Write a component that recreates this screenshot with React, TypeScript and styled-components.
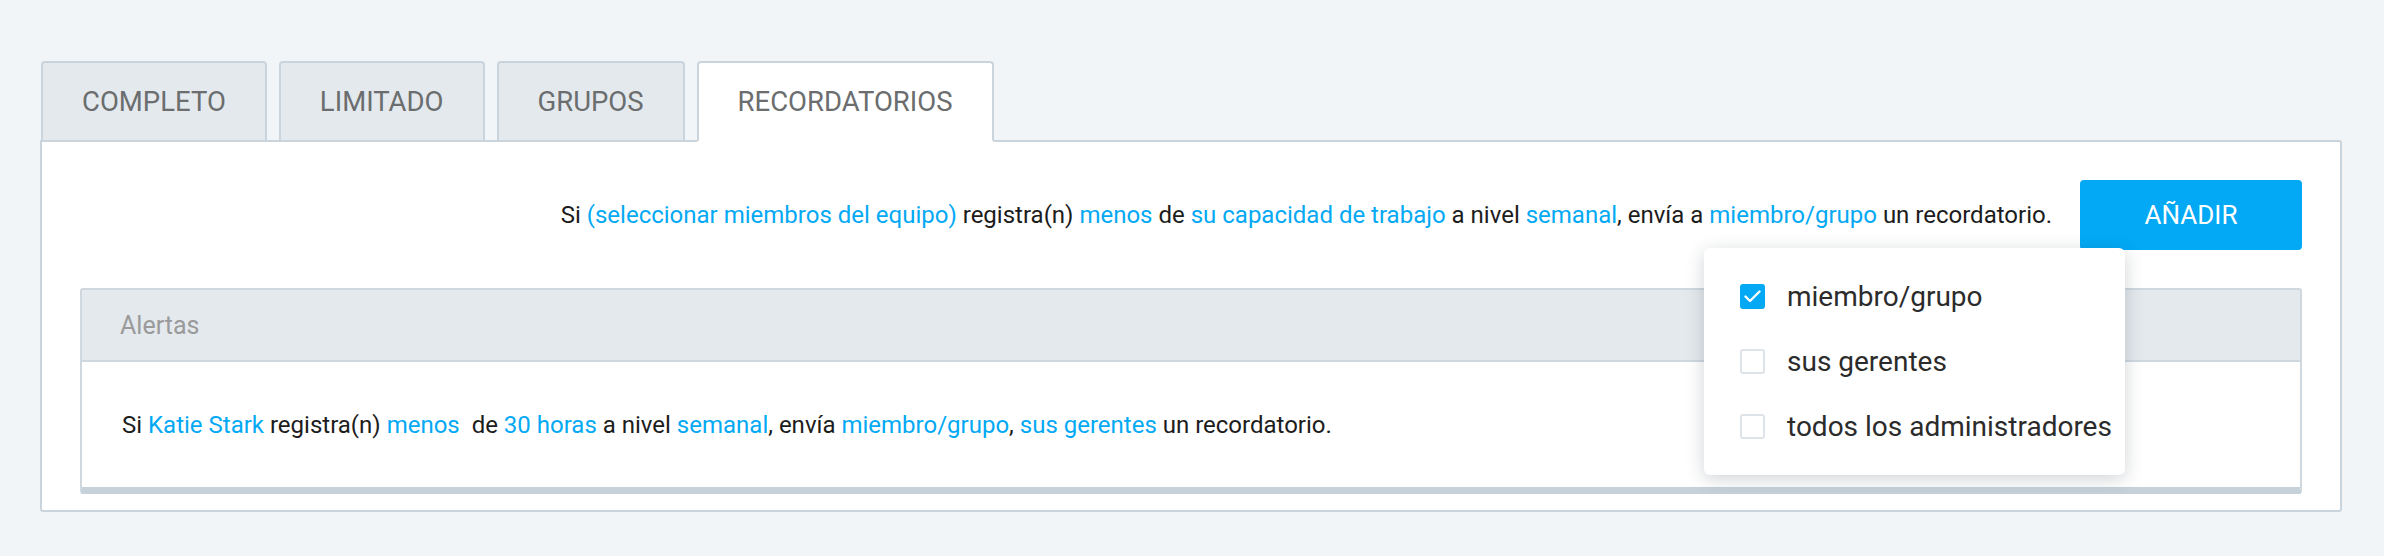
import { FC } from 'react';
import styled, { createGlobalStyle } from 'styled-components';

const GlobalStyle = createGlobalStyle`
  html, body {
    margin: 0;
    padding: 0;
    background: #f1f5f8;
    font-family: Roboto, 'Liberation Sans', Arial, sans-serif;
  }
`;

const BORDER = '#c9d4dc';
const BLUE = '#03a9f4';

const Page = styled.div`
  padding: 61px 42px 0 40px;
`;

const TabBar = styled.div`
  display: flex;
  gap: 12px;
  margin-left: 1px;
  margin-bottom: -2px;
  position: relative;
  z-index: 1;
`;

const Tab = styled.div<{ active?: boolean }>`
  display: flex;
  align-items: center;
  height: 77px;
  padding: 0 39px;
  border: 2px solid ${BORDER};
  border-bottom-color: ${({ active }) => (active ? '#fff' : BORDER)};
  border-radius: 4px 4px 0 0;
  background: ${({ active }) => (active ? '#fff' : '#e4e9ed')};
  color: #6b6d6e;
  font-size: 27.5px;
  text-transform: uppercase;
`;

const Panel = styled.div`
  background: #fff;
  border: 2px solid ${BORDER};
  border-radius: 0 3px 3px 3px;
  padding: 38px 38px 16px 38px;
`;

const RuleRow = styled.div`
  position: relative;
  display: flex;
  justify-content: flex-end;
  align-items: center;
  gap: 28px;
  height: 70px;
`;

const Sentence = styled.div`
  font-size: 24px;
  color: #1c1c1c;
  white-space: nowrap;
`;

const Link = styled.span`
  color: ${BLUE};
`;

const AddButton = styled.button`
  width: 222px;
  height: 70px;
  border: none;
  border-radius: 4px;
  background: ${BLUE};
  color: #fff;
  font-family: inherit;
  font-size: 26px;
  text-transform: uppercase;
`;

const Dropdown = styled.div`
  position: absolute;
  top: 68px;
  right: 177px;
  width: 421px;
  box-sizing: border-box;
  padding: 36px 12px 36px 36px;
  display: flex;
  flex-direction: column;
  gap: 40px;
  background: #fff;
  border-radius: 6px;
  box-shadow: 0 4px 18px rgba(40, 55, 70, 0.22);
  z-index: 2;
`;

const Option = styled.label`
  display: flex;
  align-items: center;
  gap: 22px;
  height: 25px;
  font-size: 28px;
  color: #2b2b2b;
  white-space: nowrap;
`;

const Box = styled.span<{ checked?: boolean }>`
  display: flex;
  align-items: center;
  justify-content: center;
  width: 25px;
  height: 25px;
  box-sizing: border-box;
  flex-shrink: 0;
  border-radius: 3px;
  border: ${({ checked }) => (checked ? 'none' : '2px solid #dde3e8')};
  background: ${({ checked }) => (checked ? BLUE : '#fff')};
`;

const AlertBox = styled.div`
  margin-top: 38px;
  border: 2px solid #cfd8df;
  border-bottom: 7px solid #c6d1d9;
  border-radius: 3px;
`;

const AlertHeader = styled.div`
  display: flex;
  align-items: center;
  height: 70px;
  padding: 0 38px;
  background: #e4e9ed;
  border-bottom: 2px solid #cfd8df;
  color: #9a9a9a;
  font-size: 25px;
`;

const AlertRow = styled.div`
  display: flex;
  align-items: center;
  height: 125px;
  padding: 0 40px;
  font-size: 24px;
  color: #1c1c1c;
  white-space: pre;
`;

const Check: FC = () => (
  <svg width="17" height="13" viewBox="0 0 17 13" fill="none">
    <path d="M1.5 6.5l4.5 4.5L15.5 1.5" stroke="#fff" strokeWidth="2.4" strokeLinecap="round" strokeLinejoin="round" />
  </svg>
);

const tabs = ['Completo', 'Limitado', 'Grupos', 'Recordatorios'];

const options = [
  { label: 'miembro/grupo', checked: true },
  { label: 'sus gerentes', checked: false },
  { label: 'todos los administradores', checked: false },
];

const App: FC = () => {
  return (
    <Page>
      <GlobalStyle />
      <TabBar>
        {tabs.map((t) => (
          <Tab key={t} active={t === 'Recordatorios'}>
            {t}
          </Tab>
        ))}
      </TabBar>
      <Panel>
        <RuleRow>
          <Sentence>
            Si <Link>(seleccionar miembros del equipo)</Link> registra(n) <Link>menos</Link> de{' '}
            <Link>su capacidad de trabajo</Link> a nivel <Link>semanal</Link>, envía a <Link>miembro/grupo</Link> un
            recordatorio.
          </Sentence>
          <AddButton>Añadir</AddButton>
          <Dropdown>
            {options.map((o) => (
              <Option key={o.label}>
                <Box checked={o.checked}>{o.checked && <Check />}</Box>
                {o.label}
              </Option>
            ))}
          </Dropdown>
        </RuleRow>
        <AlertBox>
          <AlertHeader>Alertas</AlertHeader>
          <AlertRow>
            Si <Link>Katie Stark</Link> registra(n) <Link>menos </Link> de <Link>30 horas</Link> a nivel{' '}
            <Link>semanal</Link>, envía <Link>miembro/grupo</Link>, <Link>sus gerentes</Link> un recordatorio.
          </AlertRow>
        </AlertBox>
      </Panel>
    </Page>
  );
};

export default App;
